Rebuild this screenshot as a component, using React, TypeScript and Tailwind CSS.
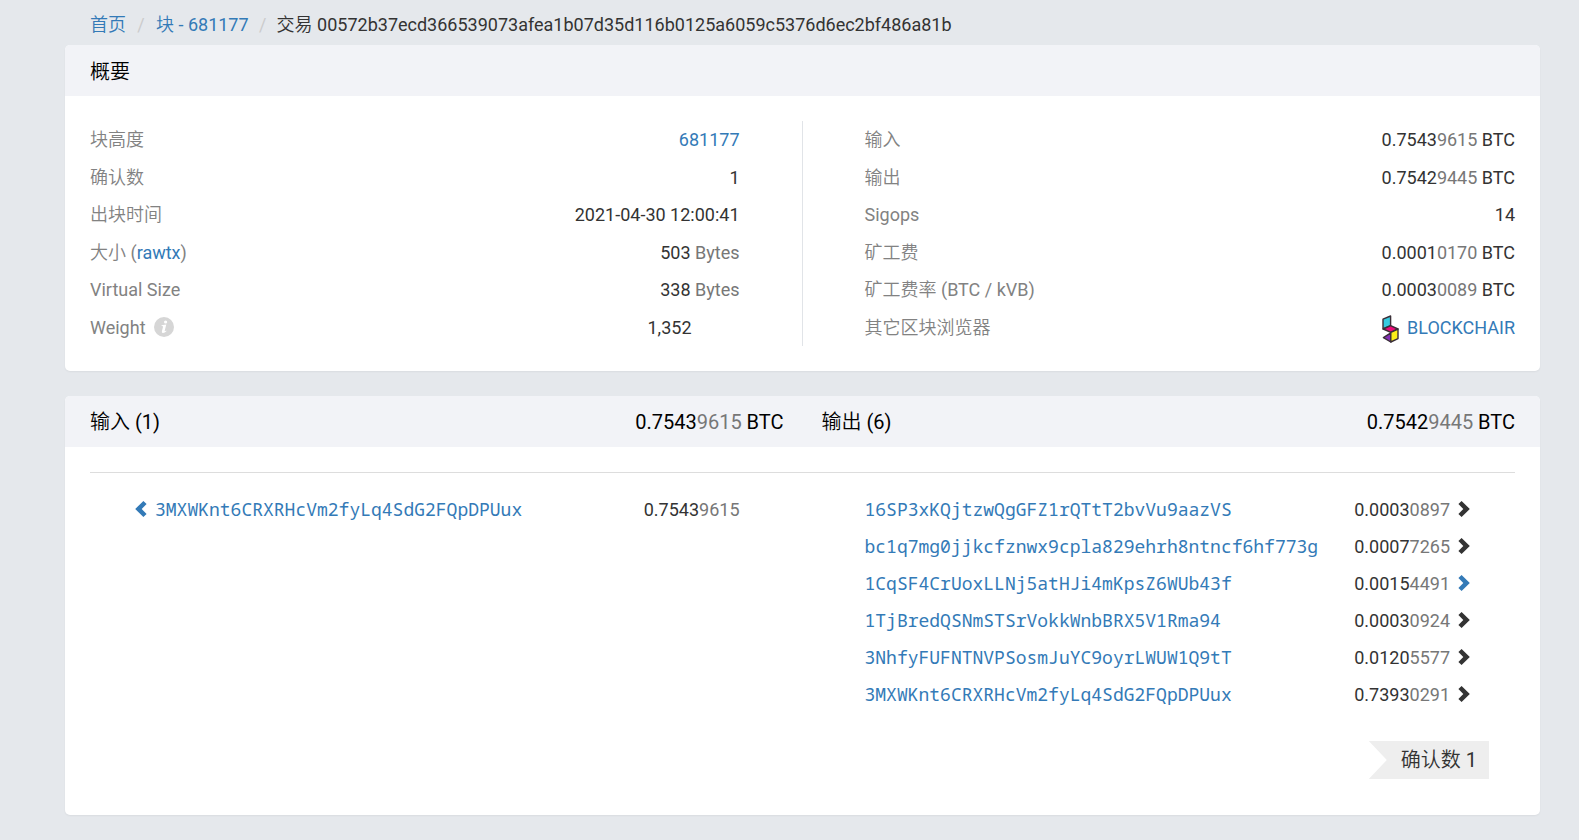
import React from 'react';

interface AmountProps {
  value: string;
  unit?: string;
}

interface Output {
  address: string;
  amount: string;
  spent?: boolean;
}

const outputs: Output[] = [
  { address: '16SP3xKQjtzwQgGFZ1rQTtT2bvVu9aazVS', amount: '0.00030897' },
  { address: 'bc1q7mg0jjkcfznwx9cpla829ehrh8ntncf6hf773g', amount: '0.00077265' },
  { address: '1CqSF4CrUoxLLNj5atHJi4mKpsZ6WUb43f', amount: '0.00154491', spent: true },
  { address: '1TjBredQSNmSTSrVokkWnbBRX5V1Rma94', amount: '0.00030924' },
  { address: '3NhfyFUFNTNVPSosmJuYC9oyrLWUW1Q9tT', amount: '0.01205577' },
  { address: '3MXWKnt6CRXRHcVm2fyLq4SdG2FQpDPUux', amount: '0.73930291' }
];

// The last four digits are dimmed
const Amount: React.FC<AmountProps> = ({ value, unit }) => (
  <span className="whitespace-nowrap">
    {value.slice(0, -4)}
    <span className="text-[#777777]">{value.slice(-4)}</span>
    {unit && ` ${unit}`}
  </span>
);

const Chevron: React.FC<{ className?: string }> = ({ className = '' }) => (
  <svg viewBox="0 0 12 16" className={`w-3 h-4 mb-0.5 shrink-0 ${className}`} fill="currentColor" aria-hidden="true">
    <path d="M3.6 0 L11.8 8 L3.6 16 L0.4 12.9 L5.3 8 L0.4 3.1 Z" />
  </svg>
);

const InfoIcon = () => (
  <svg viewBox="0 0 20 20" className="w-5 h-5" aria-hidden="true">
    <circle cx="10" cy="10" r="10" fill="#d6d6d6" />
    <circle cx="11.6" cy="5" r="1.6" fill="#fff" />
    <path d="M7.6 8.2 L12.3 7.6 L10.7 13.8 Q10.6 14.6 12.2 13.6 L12.4 14.2 Q10.6 16.2 8.8 16 Q7.5 15.8 7.9 14.2 L9.1 9.4 Q9.2 8.8 7.5 8.9 Z" fill="#fff" />
  </svg>
);

const BlockchairLogo = () => (
  <svg viewBox="0 0 17 28" className="w-[17px] h-7 mt-1" strokeLinejoin="round" aria-hidden="true">
    <g stroke="#3a2f38" strokeWidth="1.4">
      <path d="M1 4.2 L8.6 1 V10.6 L1 14 Z" fill="#35cbe0" />
      <path d="M1.2 14 L8.6 10.6 L16 14 L8.8 17.4 Z" fill="#ec0a78" />
      <path d="M1.4 22.6 L8.8 17.8 V27 Z" fill="#8330b4" />
      <path d="M8.8 17.4 L16 14 V23.6 L8.8 27 Z" fill="#fbee18" />
    </g>
  </svg>
);

const Row: React.FC<{ label: React.ReactNode; children: React.ReactNode }> = ({ label, children }) => (
  <div className="flex items-center justify-between">
    <dt className="flex items-center text-[#828282]">{label}</dt>
    <dd>{children}</dd>
  </div>
);

const link = 'text-[#337ab7] hover:underline';
const card = 'bg-white rounded-[5px] shadow-xs overflow-hidden';
const mono = "font-['Noto_Sans_Mono','Droid_Sans_Mono','DejaVu_Sans_Mono',monospace]";

const App = () => {
  return (
    <div className="min-h-screen bg-[#e5e8ec] pl-[65px] pr-[39px] pb-6 text-lg leading-[25px] text-[#333333] font-[Roboto,'Noto_Sans_CJK_SC_DemiLight','Noto_Sans_CJK_SC_Light','Noto_Sans_CJK_SC',sans-serif]">
      <nav className="flex items-center h-[45px] pt-1 px-[25px] whitespace-nowrap">
        <a href="#" className={link}>首页</a>
        <span className="w-[30px] text-center text-[#cccccc]">/</span>
        <a href="#" className={link}>块 - 681177</a>
        <span className="w-7 text-center text-[#cccccc]">/</span>
        <span>交易 00572b37ecd366539073afea1b07d35d116b0125a6059c5376d6ec2bf486a81b</span>
      </nav>

      <section className={card}>
        <h2 className="flex items-center h-[51px] px-[25px] pt-0.5 bg-[#f2f3f7] text-xl text-black">概要</h2>
        <div className="grid grid-cols-2 p-[25px]">
          <dl className="grid grid-rows-6 h-[225px] pr-[62px] border-r border-[#e1e4e8]">
            <Row label="块高度"><a href="#" className={link}>681177</a></Row>
            <Row label="确认数">1</Row>
            <Row label="出块时间">2021-04-30 12:00:41</Row>
            <Row label={<>大小&nbsp;(<a href="#" className={link}>rawtx</a>)</>}>
              503 <span className="text-[#777777]">Bytes</span>
            </Row>
            <Row label="Virtual Size">
              338 <span className="text-[#777777]">Bytes</span>
            </Row>
            <Row label={<><span className="mr-2">Weight</span><InfoIcon /></>}>
              <span className="mr-12">1,352</span>
            </Row>
          </dl>
          <dl className="grid grid-rows-6 h-[225px] pl-[62px]">
            <Row label="输入"><Amount value="0.75439615" unit="BTC" /></Row>
            <Row label="输出"><Amount value="0.75429445" unit="BTC" /></Row>
            <Row label="Sigops">14</Row>
            <Row label="矿工费"><Amount value="0.00010170" unit="BTC" /></Row>
            <Row label="矿工费率 (BTC / kVB)"><Amount value="0.00030089" unit="BTC" /></Row>
            <Row label="其它区块浏览器">
              <a href="#" className={`flex items-center gap-2 h-7 ${link}`}>
                <BlockchairLogo />
                BLOCKCHAIR
              </a>
            </Row>
          </dl>
        </div>
      </section>

      <section className={`mt-[25px] ${card}`}>
        <div className="grid grid-cols-2 h-[51px] bg-[#f2f3f7] text-xl text-black">
          <h2 className="flex items-center justify-between pl-[25px] pr-[19px]">
            <span>输入 (1)</span>
            <Amount value="0.75439615" unit="BTC" />
          </h2>
          <h2 className="flex items-center justify-between pl-[19px] pr-[25px]">
            <span>输出 (6)</span>
            <Amount value="0.75429445" unit="BTC" />
          </h2>
        </div>
        <div className="px-[25px] pt-[25px] pb-9">
          <hr className="border-[#dddddd]" />
          <div className="grid grid-cols-2 pt-[18px]">
            <ul className="pl-[45px] pr-[63px]">
              <li className="flex items-center h-[37px]">
                <a href="#" aria-label="上一笔交易" className="text-[#337ab7]"><Chevron className="rotate-180" /></a>
                <a href="#" className={`ml-2 ${mono} ${link}`}>3MXWKnt6CRXRHcVm2fyLq4SdG2FQpDPUux</a>
                <span className="ml-auto"><Amount value="0.75439615" /></span>
              </li>
            </ul>
            <ul className="pl-[62px] pr-[45px]">
              {outputs.map((output) => (
                <li key={output.address} className="flex items-center h-[37px]">
                  <a href="#" className={`${mono} ${link}`}>{output.address}</a>
                  <span className="ml-auto mr-2"><Amount value={output.amount} /></span>
                  <Chevron className={output.spent ? 'text-[#337ab7]' : ''} />
                </li>
              ))}
            </ul>
          </div>
          <div className="flex justify-end mt-7 pr-[26px]">
            <div className="flex items-center h-[38px] pl-8 pr-3 bg-[#eeeeee] text-xl [clip-path:polygon(0_0,100%_0,100%_100%,0_100%,18px_50%)]">
              确认数 1
            </div>
          </div>
        </div>
      </section>
    </div>
  );
};

export default App;
